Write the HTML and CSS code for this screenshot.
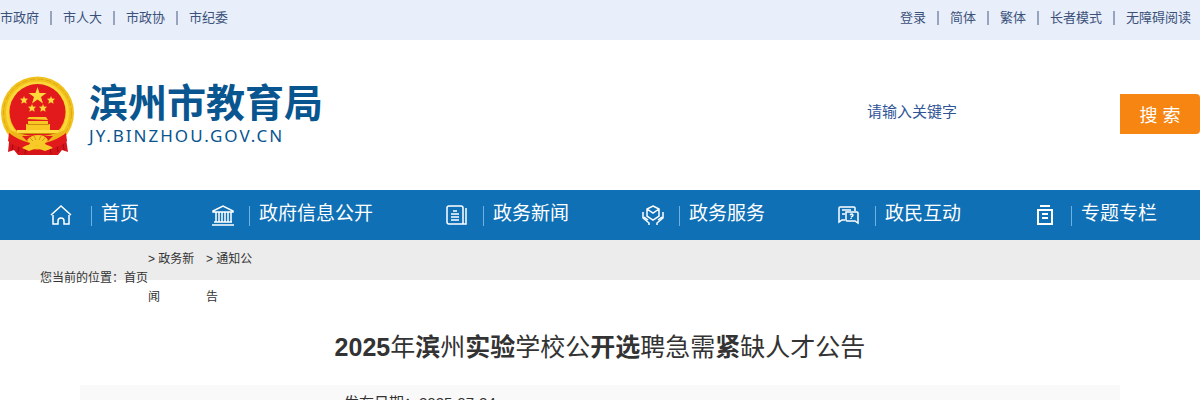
FILE: index.html
```html
<!DOCTYPE html>
<html lang="zh-CN">
<head>
  <meta charset="UTF-8">
  <meta name="viewport" content="width=device-width, initial-scale=1">
  <title>2025年滨州实验学校公开选聘急需紧缺人才公告</title>
  <link rel="stylesheet" href="styles.css">
</head>
<body>
  <div class="topbar">
    <ul class="links">
      <li><a href="#">市政府</a></li>
      <li><a href="#">市人大</a></li>
      <li><a href="#">市政协</a></li>
      <li><a href="#">市纪委</a></li>
    </ul>
    <ul class="links">
      <li><a href="#">登录</a></li>
      <li><a href="#">简体</a></li>
      <li><a href="#">繁体</a></li>
      <li><a href="#">长者模式</a></li>
      <li><a href="#">无障碍阅读</a></li>
    </ul>
  </div>

  <header class="header">
    <a class="logo" href="#">
      <svg class="emblem" viewBox="0 0 76 80" aria-hidden="true">
        <path d="M10 56L8 76l6-2 4 5h40l4-5 6 2-3-20z" fill="#d7141a"/>
        <path d="M14 62l-2 12M20 64l-2 12M26 70l-1 8M62 62l2 12M56 64l2 12M50 70l1 8" stroke="#9e0b10" fill="none"/>
        <circle cx="37.500" cy="37" r="36.500" fill="#f2c21c"/>
        <circle cx="37.500" cy="37" r="34" fill="none" stroke="#dfa716" stroke-width="1" stroke-dasharray="6 2"/>
        <circle cx="37.500" cy="37" r="30" fill="none" stroke="#fbd83a" stroke-width="3"/>
        <circle cx="37.500" cy="36" r="28" fill="#e21a1c"/>
        <path d="M37.500 11l2 6h7l-5.500 4 2 6.500-5.500-4-5.500 4 2-6.500-5.500-4h7z" fill="#ffd83a"/>
        <path id="s" d="M24 20l1 2.500 3 .3-2 2 .6 3-2.600-1.600-2.600 1.600.6-3-2-2 3-.3z" fill="#ffd83a"/>
        <use href="#s" x="27"/>
        <use href="#s" x="8" y="8"/>
        <use href="#s" x="19" y="8"/>
        <path d="M27 43l2-2h17l2 3zM28 45h20v3H28zM26 48h24v6H26z" fill="#f8c824"/>
        <path d="M17 54h42v4H17z" fill="#ffdc42"/>
        <path d="M27 48.500h22M18 57.500h40" stroke="#d18c10" fill="none"/>
        <path d="M10 54q27 12 55 0l-4 8q-23 14-47 0z" fill="#eeb51a"/>
        <path d="M22 60h31l-5 5H27z" fill="#e21a1c"/>
        <path d="M27 64q4-5 11-5t10 5l-4 5H31z" fill="#f8ca27"/>
        <path d="M33 65l-3-3M36 64l-2-4M39 64l2-4M42 65l3-3" stroke="#d4930f" fill="none"/>
        <path d="M9 57q9 7 21 10l-3 6q-13-2-19-8zM66 57q-9 7-21 10l3 6q13-2 19-8z" fill="#e21a1c"/>
        <path d="M22 72q7-6 15-2 9-4 16 2l-8 3-8-3-8 3z" fill="#f8ca27"/>
      </svg>
      <span class="logo-text">
        <span class="logo-name">滨州市教育局</span>
        <span class="logo-domain">JY.BINZHOU.GOV.CN</span>
      </span>
    </a>
    <form class="search">
      <input type="text" aria-label="请输入关键字" placeholder="请输入关键字">
      <button type="button">搜 索</button>
    </form>
  </header>

  <nav class="nav">
    <a class="home" href="#">
      <svg viewBox="0 0 22 22" aria-hidden="true"><path d="M1 11L11 2l10 9M3 11v9h5v-3q0-3 3-3t3 3v3h5v-9"/></svg>
      <span>首页</span>
    </a>
    <a href="#">
      <svg viewBox="0 0 22 22" aria-hidden="true"><path d="M1 7l10-5 10 5v1H1zM4 8v10M7 8v10M10 8v10M13 8v10M16 8v10M19 8v10M2 18h18M0 21h22"/></svg>
      <span>政府信息公开</span>
    </a>
    <a href="#">
      <svg viewBox="0 0 22 22" aria-hidden="true"><path d="M3 2h12q2 0 2 2v16H3q-2 0-2-2V4q0-2 2-2zM15 20h5V4M7 7h4M5 10h8M5 13h8M5 16h8"/></svg>
      <span>政务新闻</span>
    </a>
    <a href="#">
      <svg viewBox="0 0 22 22" aria-hidden="true"><path d="M11 2l6 3v7l-6 4-6-4V5zM5 5l6 4 6-4M1 8v6l6 5v2M2 13l4 3M21 8v6l-6 5v2M20 13l-4 3"/></svg>
      <span>政务服务</span>
    </a>
    <a href="#">
      <svg viewBox="0 0 22 22" aria-hidden="true"><path d="M7 16H4l-3 2V4q0-1 1-1h14q1 0 1 1v3M4 6h9M4 10h3M8 8h11q1 0 1 1v10l-3-2H9q-1 0-1-1zM12 11q2-2 3 0 0 1-2 2M13 14v1"/></svg>
      <span>政民互动</span>
    </a>
    <a href="#">
      <svg class="bold" viewBox="0 0 22 22" aria-hidden="true"><path d="M6 2h10M4 6h14v14H4zM8 10h6M8 14h6"/></svg>
      <span>专题专栏</span>
    </a>
  </nav>

  <div class="crumbs">
    <span>您当前的位置：<a href="#">首页</a></span>
    <a class="crumb" href="#">&gt; 政务新闻</a>
    <a class="crumb" href="#">&gt; 通知公告</a>
  </div>

  <main class="article">
    <h1><b>2025</b>年<b>滨</b>州<b>实验</b>学校公<b>开选</b>聘急需<b>紧</b>缺人才公告</h1>
    <div class="info">
      <span>发布日期：2025-07-24</span>
    </div>
  </main>
</body>
</html>
```

FILE: styles.css
```css
* {
  box-sizing: border-box;
}

body {
  margin: 0;
  font-family: "Liberation Sans", "Noto Sans CJK SC", sans-serif;
  font-size: 12px;
  color: #333;
  background: #fff;
}

a {
  color: inherit;
  text-decoration: none;
}

.topbar {
  display: flex;
  justify-content: space-between;
  height: 40px;
  padding-right: 9px;
  background: #e8eefa;
}

.links {
  display: flex;
  margin: 0;
  padding: 0;
  list-style: none;
  font-size: 13px;
  line-height: 36px;
  color: #3b5179;
}

.links li {
  display: flex;
  align-items: center;
  height: 36px;
}

.links li + li::before {
  content: "";
  width: 2px;
  height: 14px;
  margin: 0 11px;
  background: #96a5bd;
}

/* header */
.header {
  display: flex;
  justify-content: space-between;
  height: 150px;
}

.logo {
  display: flex;
  padding-top: 36px;
  color: #08558f;
}

.emblem {
  width: 76px;
  height: 80px;
}

.logo-text {
  display: flex;
  flex-direction: column;
  padding-left: 13px;
}

.logo-name {
  font-size: 39px;
  font-weight: bold;
  line-height: 56px;
}

.logo-domain {
  margin-top: -4px;
  font-family: "Noto Sans", sans-serif;
  font-size: 17px;
  line-height: 16px;
  letter-spacing: 2px;
}

.search {
  display: flex;
  height: 40px;
  margin-top: 54px;
}

.search input {
  width: 254px;
  padding: 0 0 6px 1px;
  border: 0;
  outline: none;
  font-family: inherit;
  font-size: 15px;
  color: #2f5597;
}

.search input::placeholder {
  color: #2f5597;
}

.search button {
  width: 80px;
  padding: 0;
  border: 0;
  border-radius: 0 4px 4px 0;
  font-family: inherit;
  font-size: 18px;
  color: #fff;
  background: #f68511;
  cursor: pointer;
}

/* main menu */
.nav {
  display: flex;
  justify-content: space-between;
  height: 50px;
  padding: 0 43px 0 50px;
  background: #1070b5;
  color: #fff;
  font-size: 19px;
}

.nav a {
  display: flex;
}

.nav svg {
  width: 22px;
  height: 22px;
  margin: 14px 15px 0 4px;
  fill: none;
  stroke: #fff;
  stroke-width: 1.5;
}

.nav .home svg {
  margin: 14px 19px 0 0;
}

.nav svg.bold {
  stroke-width: 2;
}

.nav a::before {
  content: "";
  order: 1;
  width: 1px;
  height: 20px;
  margin-top: 16px;
  background: #6fb2e2;
}

.nav span {
  order: 2;
  padding-left: 9px;
  line-height: 48px;
}

/* the items wrap and run past the grey bar */
.crumbs {
  display: flex;
  height: 40px;
  padding-left: 40px;
  line-height: 38px;
  background: #ececec;
}

.crumbs span {
  line-height: 76px;
}

.crumb {
  width: 56px;
  margin-right: 2px;
}

/* article */
.article {
  padding: 0 80px;
}

h1 {
  margin: 0;
  padding: 48px 0 18px;
  font-size: 25px;
  font-weight: normal;
  line-height: 39px;
  text-align: center;
}

.info {
  padding-left: 264px;
  font-size: 15px;
  line-height: 36px;
  background: #f9f9f9;
}
```
